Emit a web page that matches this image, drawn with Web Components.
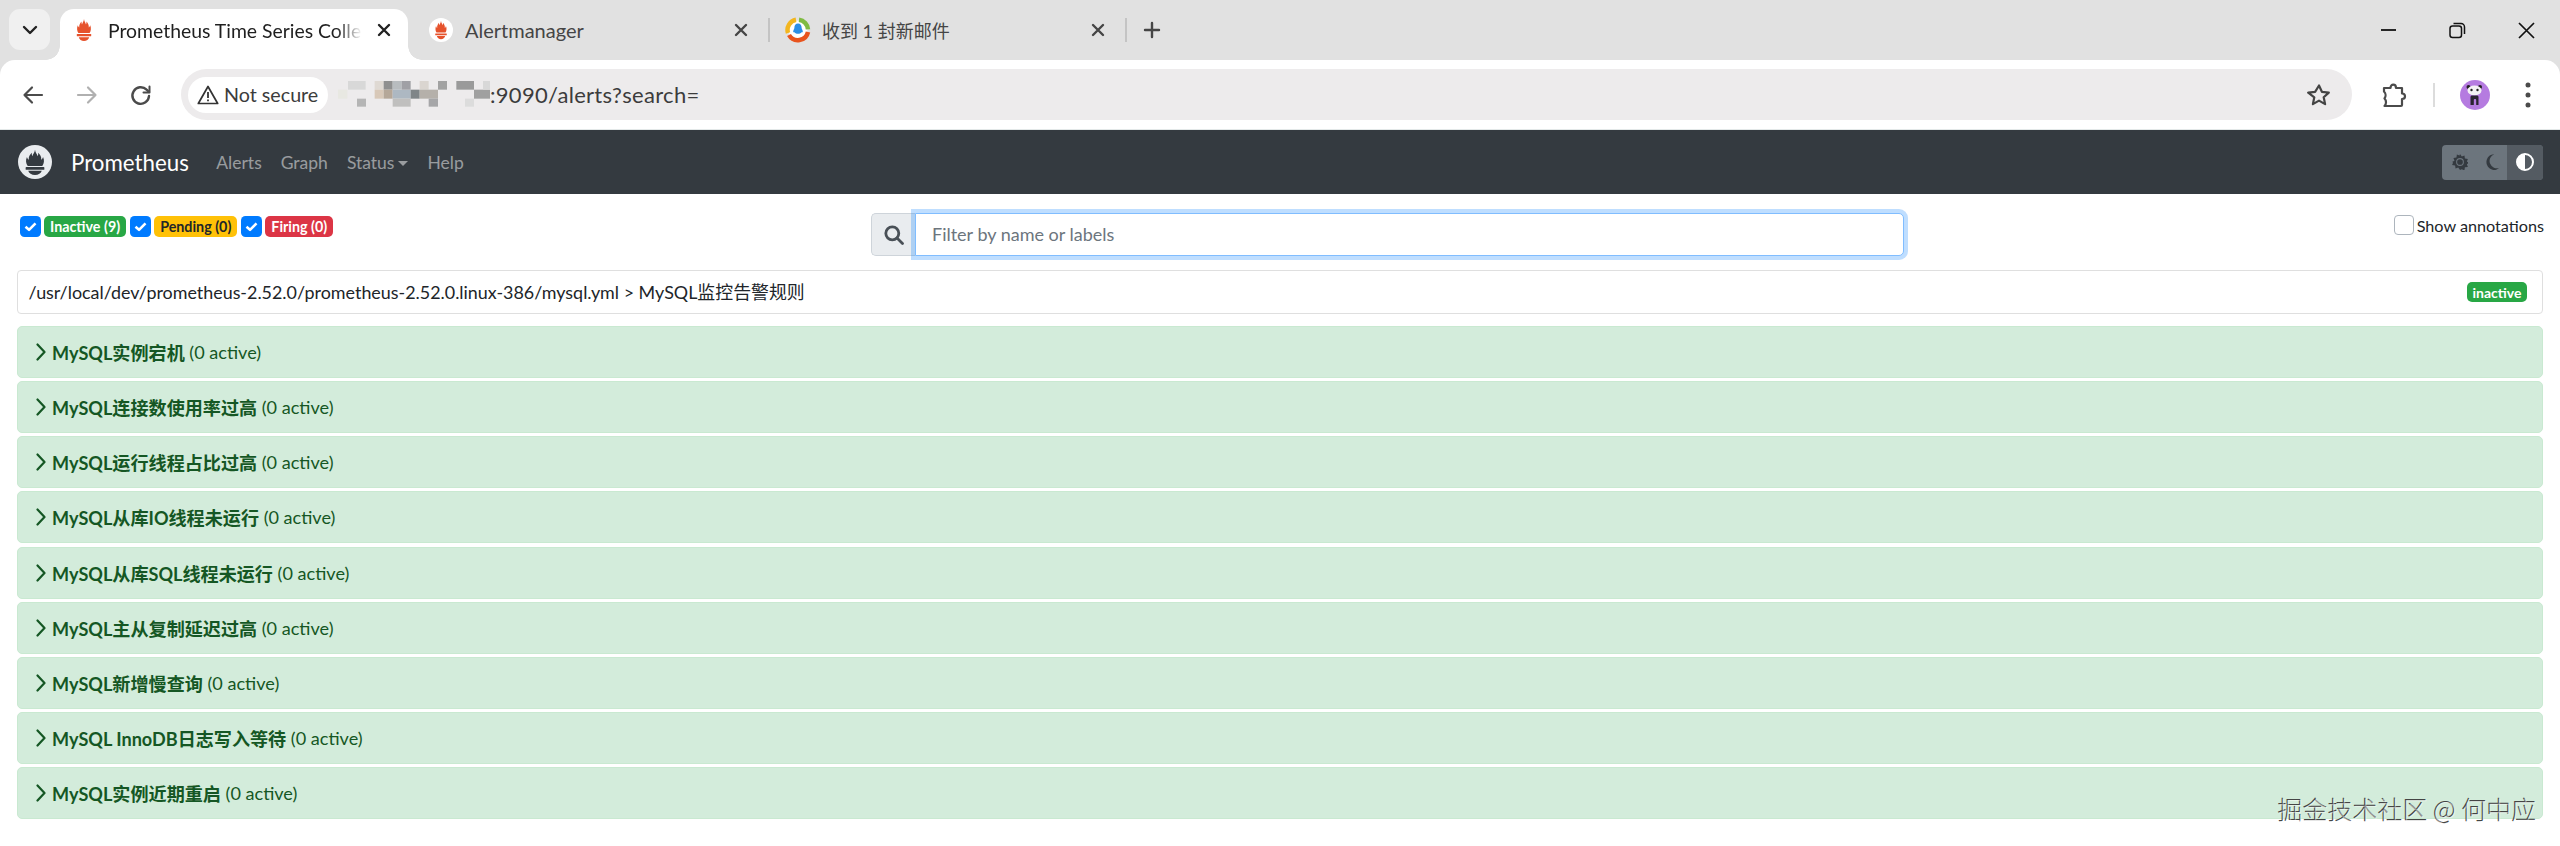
<!DOCTYPE html>
<html lang="en">
<head>
<meta charset="utf-8">
<title>Prometheus Time Series Collection and Processing Server</title>
<style>
    html, body {
        margin: 0;
        padding: 0;
        width: 2560px;
        height: 846px;
        overflow: hidden;
        background: #fff;
        font-family: Lato, "Noto Sans CJK SC", sans-serif;
        color: #212529;
    }
    body {
        position: relative;
    }
</style>
</head>
<body>
<chrome-tabs></chrome-tabs>
<chrome-toolbar></chrome-toolbar>
<prom-navbar></prom-navbar>
<alert-filters></alert-filters>
<rule-header file="/usr/local/dev/prometheus-2.52.0/prometheus-2.52.0.linux-386/mysql.yml &gt; MySQL监控告警规则"></rule-header>
<alert-row>MySQL实例宕机</alert-row>
<alert-row>MySQL连接数使用率过高</alert-row>
<alert-row>MySQL运行线程占比过高</alert-row>
<alert-row>MySQL从库IO线程未运行</alert-row>
<alert-row>MySQL从库SQL线程未运行</alert-row>
<alert-row>MySQL主从复制延迟过高</alert-row>
<alert-row>MySQL新增慢查询</alert-row>
<alert-row>MySQL InnoDB日志写入等待</alert-row>
<alert-row>MySQL实例近期重启</alert-row>
<juejin-mark>掘金技术社区 @ 何中应</juejin-mark>

<script>
const FLAME = `
    <path d="M12 1c.3 2.500 1.500 3.500 2 5.500.5-1 .6-2 .4-3 1.600 1.500 2.600 3.500 2.400 6 .7-.5 1.200-1.200 1.400-2.300 1.200 2.800.8 5.800-.6 7.800H6.400c-1.400-2-1.800-5-.6-7.800.2 1.100.7 1.800 1.400 2.300-.2-2.500.8-4.500 2.400-6-.2 1-.1 2 .4 3 .5-2 1.700-3 2-5.500z"/>
    <rect x="4.800" y="16" width="14.400" height="2.300" rx=".5"/>
    <path d="M6.800 19.200h10.400c-.5 2.200-2.600 3.700-5.200 3.700s-4.700-1.500-5.200-3.700z"/>`;

class ChromeTabs extends HTMLElement {
    constructor() {
        super();
        this.attachShadow({ mode: 'open' });
    }

    connectedCallback() {
        this.render();
    }

    render() {
        const closeIcon = (color) => `
            <svg class="x" width="14" height="14" viewBox="0 0 14 14" fill="none" stroke="${color}" stroke-width="2.400" stroke-linecap="round"><path d="M2 2l10 10M12 2L2 12"/></svg>`;

        this.shadowRoot.innerHTML = `
            <style>
                :host {
                    display: flex;
                    height: 60px;
                    box-sizing: border-box;
                    padding-top: 9px;
                    background: #e1e1e1;
                    font-size: 20px;
                    color: #454545;
                }
                .menu {
                    width: 41px;
                    height: 41px;
                    margin: 0 10px 0 9px;
                    border-radius: 11px;
                    background: #f0f0f0;
                    display: flex;
                    align-items: center;
                    justify-content: center;
                }
                .tab {
                    display: flex;
                    align-items: center;
                    height: 42px;
                    position: relative;
                    box-sizing: border-box;
                    flex: none;
                }
                .tab.active {
                    width: 348px;
                    height: 51px;
                    padding: 0 17px 9px 12px;
                    background: #fff;
                    border-radius: 14px 14px 0 0;
                    color: #1f1f1f;
                }
                .tab.active::before, .tab.active::after {
                    content: '';
                    position: absolute;
                    bottom: 0;
                    width: 14px;
                    height: 14px;
                    background: radial-gradient(circle at 0 0, transparent 13.500px, #fff 14px);
                }
                .tab.active::before {
                    left: -14px;
                }
                .tab.active::after {
                    right: -14px;
                    transform: scaleX(-1);
                }
                .tab.second {
                    width: 362px;
                    padding: 0 22px 0 21px;
                }
                .tab.third {
                    width: 357px;
                    padding: 0 22px 0 15px;
                }
                .tab .label {
                    flex: 1;
                    white-space: nowrap;
                    overflow: hidden;
                    min-width: 0;
                    margin-left: 12px;
                }
                .tab.active .label {
                    margin-right: 15px;
                    font-size: 19.400px;
                    -webkit-mask-image: linear-gradient(to right, #000 90%, transparent 100%);
                    mask-image: linear-gradient(to right, #000 90%, transparent 100%);
                }
                .tab.third .label {
                    margin-left: 11px;
                    font-size: 18px;
                }
                .tab.second::after, .tab.third::after {
                    content: '';
                    position: absolute;
                    right: 0;
                    top: 9px;
                    width: 2px;
                    height: 24px;
                    background: #c4c4c4;
                }
                .plus {
                    margin-left: 16px;
                    align-self: flex-start;
                    margin-top: 12px;
                }
                .spacer {
                    flex: 1;
                }
                .win {
                    display: flex;
                    align-items: center;
                    height: 42px;
                    margin-right: 25px;
                    gap: 52px;
                }
                svg {
                    flex: none;
                    display: block;
                }
            </style>
            <div class="menu">
                <svg width="16" height="10" viewBox="0 0 16 10" fill="none" stroke="#222" stroke-width="2.400" stroke-linecap="round" stroke-linejoin="round"><path d="M2 2l6 6 6-6"/></svg>
            </div>
            <div class="tab active">
                <svg width="24" height="24" viewBox="0 0 24 24" fill="#e6522c">${FLAME}</svg>
                <span class="label">Prometheus Time Series Colle</span>
                ${closeIcon('#222')}
            </div>
            <div class="tab second">
                <svg width="24" height="24" viewBox="0 0 24 24" fill="#e6522c"><circle cx="12" cy="12" r="12" fill="#fff"/><g transform="translate(2.400 1.800) scale(.8 .85)">${FLAME}</g></svg>
                <span class="label">Alertmanager</span>
                ${closeIcon('#454545')}
            </div>
            <div class="tab third">
                <svg width="26" height="26" viewBox="0 0 26 26" fill="none" stroke-width="4.500">
                    <circle cx="13" cy="13" r="9.500" fill="#fff" stroke="none"/>
                    <path d="M14 2.800a10.300 10.300 0 0 1 9 9.600" stroke="#7fbb42"/>
                    <path d="M23 15a10.300 10.300 0 0 1-19 3" stroke="#e8541e"/>
                    <path d="M3 16a10.300 10.300 0 0 1 8-13.200" stroke="#f3b61f"/>
                    <path d="M13 6.500c2.500 0 3.600 2 3.600 4 0 1 .4 1.500 1 3 .5 1.400 0 2.300-.8 1.500-.5 1.200-2 1.800-3.800 1.800s-3.300-.6-3.800-1.800c-.8.800-1.300-.1-.8-1.500.6-1.500 1-2 1-3 0-2 1.100-4 3.600-4z" fill="#2b8fe6" stroke="none"/>
                </svg>
                <span class="label">收到 1 封新邮件</span>
                ${closeIcon('#454545')}
            </div>
            <svg class="plus" width="18" height="18" viewBox="0 0 18 18" fill="none" stroke="#454545" stroke-width="2.400" stroke-linecap="round"><path d="M9 2v14M2 9h14"/></svg>
            <div class="spacer"></div>
            <div class="win">
                <svg width="17" height="17" viewBox="0 0 17 17" fill="none" stroke="#111" stroke-width="1.800"><path d="M1 8h15"/></svg>
                <svg width="17" height="17" viewBox="0 0 17 17" fill="none" stroke="#111" stroke-width="1.500"><rect x="1" y="4" width="11.500" height="11.500" rx="2.500"/><path d="M4.500 1.500h7.500a3.500 3.500 0 0 1 3.500 3.500v7"/></svg>
                <svg width="17" height="17" viewBox="0 0 17 17" fill="none" stroke="#111" stroke-width="1.700"><path d="M1 1l15 15M16 1L1 16"/></svg>
            </div>
        `;
    }
}

class ChromeToolbar extends HTMLElement {
    constructor() {
        super();
        this.attachShadow({ mode: 'open' });
    }

    connectedCallback() {
        this.render();
    }

    render() {
        // mosaic over the host name, cells copied from the screenshot
        const cells = [
            [60, 27, 53, 26, '#d8d8d8'], [87, 80, 27, 24, '#b5b5b5'], [30, 53, 28, 27, '#e8e8e2'],
            [140, 27, 27, 26, '#dfd9d3'], [140, 53, 27, 27, '#d8c8b8'], [167, 27, 27, 26, '#8f8f8f'],
            [167, 53, 27, 27, '#b5a798'], [194, 27, 27, 26, '#b8bcbf'], [194, 53, 54, 27, '#adb8c2'],
            [194, 80, 54, 24, '#c0bfbe'], [221, 27, 27, 26, '#a0a0a5'], [248, 53, 27, 27, '#7f8588'],
            [275, 27, 27, 26, '#dad5d0'], [275, 53, 55, 27, '#b5b0aa'], [302, 80, 28, 24, '#a6a6a8'],
            [330, 27, 27, 26, '#a2a2a2'], [385, 27, 53, 26, '#9a9a9a'], [438, 53, 48, 27, '#a0a0a0'],
            [465, 27, 21, 26, '#d8d8d8'], [411, 80, 27, 24, '#dcdcdc']
        ].map(([x, y, w, h, c]) => `<rect x="${x}" y="${y}" width="${w}" height="${h}" fill="${c}"/>`).join('');

        this.shadowRoot.innerHTML = `
            <style>
                :host {
                    display: block;
                    background: #e1e1e1;
                }
                .bar {
                    display: flex;
                    align-items: center;
                    height: 70px;
                    box-sizing: border-box;
                    background: #fff;
                    border-bottom: 1px solid #e3e8e8;
                    border-radius: 15px 15px 0 0;
                    padding-left: 21px;
                    font-size: 19.700px;
                    color: #3c3c3c;
                }
                svg {
                    flex: none;
                    display: block;
                }
                .nav {
                    display: flex;
                    gap: 30px;
                    margin-right: 28px;
                }
                .omni {
                    width: 2171px;
                    height: 51px;
                    flex: none;
                    box-sizing: border-box;
                    background: #edebec;
                    border-radius: 26px;
                    display: flex;
                    align-items: center;
                    padding-left: 7px;
                }
                .chip {
                    width: 140px;
                    height: 36px;
                    box-sizing: border-box;
                    padding-left: 9px;
                    background: #fff;
                    border-radius: 18px;
                    display: flex;
                    align-items: center;
                    gap: 5px;
                    white-space: nowrap;
                }
                .url {
                    flex: 1;
                    white-space: nowrap;
                    font-size: 22px;
                    letter-spacing: .3px;
                }
                .star {
                    margin-right: 21px;
                }
                .ext {
                    margin-left: 29px;
                }
                .sep {
                    width: 2px;
                    height: 24px;
                    margin: 0 25px 0 26px;
                    background: #dcdcdc;
                }
                .avatar {
                    width: 30px;
                    height: 30px;
                }
                .dots {
                    margin-left: 35px;
                }
            </style>
            <div class="bar">
                <div class="nav">
                    <svg width="24" height="24" viewBox="0 0 24 24" fill="none" stroke="#4b4b4b" stroke-width="2.200" stroke-linecap="round" stroke-linejoin="round"><path d="M21 12H3.500M11 4.500L3.500 12l7.500 7.500"/></svg>
                    <svg width="24" height="24" viewBox="0 0 24 24" fill="none" stroke="#b0b0b0" stroke-width="2.200" stroke-linecap="round" stroke-linejoin="round"><path d="M3 12h17.500M13 4.500l7.500 7.500-7.500 7.500"/></svg>
                    <svg width="24" height="24" viewBox="0 0 24 24" fill="none" stroke="#4b4b4b" stroke-width="2.400" stroke-linecap="round" stroke-linejoin="round"><path d="M20 13a8.300 8.300 0 1 1-2.400-6.300L20 9"/><path d="M20.500 3.500V9.500H14.500" stroke-width="2"/></svg>
                </div>
                <div class="omni">
                    <div class="chip">
                        <svg width="22" height="20" viewBox="0 0 22 20" fill="none" stroke="#333" stroke-width="1.700" stroke-linejoin="round"><path d="M11 1.500L20.700 18.500H1.300z"/><path d="M11 7v6M11 14.500v1.800" stroke-width="1.800"/></svg>
                        <span>Not secure</span>
                    </div>
                    <svg width="162" height="46" viewBox="0 0 486 138">${cells}</svg>
                    <span class="url">:9090/alerts?search=</span>
                    <svg class="star" width="24" height="24" viewBox="0 0 24 24" fill="none" stroke="#444" stroke-width="2.200" stroke-linejoin="round"><path d="M12 2.500l2.900 6.300 6.900.8-5.100 4.700 1.400 6.800-6.100-3.500-6.100 3.500 1.400-6.800L1.200 9.600l6.900-.8z"/></svg>
                </div>
                <svg class="ext" width="26" height="26" viewBox="0 0 26 26" fill="none" stroke="#4b4b4b" stroke-width="2.200" stroke-linejoin="round"><path d="M3 6h6.500c0-4.500 5.500-4.500 5.500 0h6v5.500c4 0 4 5.500 0 5.500v6a1 1 0 0 1-1 1H3.500c2-2 2-5.500 0-7.500 1.500-2 1.500-5 -.5-7z"/></svg>
                <div class="sep"></div>
                <svg class="avatar" viewBox="0 0 30 30">
                    <circle cx="15" cy="15" r="15" fill="#b57be0"/>
                    <circle cx="8.500" cy="7" r="2" fill="#222"/><circle cx="20" cy="7" r="2" fill="#222"/>
                    <ellipse cx="14.500" cy="10.500" rx="7" ry="5" fill="#f4f2f4"/>
                    <circle cx="11.500" cy="10" r="1.200" fill="#222"/><circle cx="17.500" cy="10" r="1.200" fill="#222"/>
                    <path d="M10.500 25v-8c0-1 .8-1.500 1.500-1.500h5c.7 0 1.500.5 1.500 1.500v8h-2.300v-5c0-1.200-2.400-1.200-2.400 0v5z" fill="#2a2430"/>
                </svg>
                <svg class="dots" width="6" height="26" viewBox="0 0 6 26" fill="#4b4b4b"><circle cx="3" cy="3" r="2.500"/><circle cx="3" cy="13" r="2.500"/><circle cx="3" cy="23" r="2.500"/></svg>
            </div>
        `;
    }
}

class PromNavbar extends HTMLElement {
    constructor() {
        super();
        this.attachShadow({ mode: 'open' });
    }

    connectedCallback() {
        this.render();
    }

    render() {
        this.shadowRoot.innerHTML = `
            <style>
                :host {
                    display: flex;
                    align-items: center;
                    height: 64px;
                    box-sizing: border-box;
                    padding: 0 17px 0 18px;
                    background: #343a40;
                    font-size: 17.500px;
                }
                .logo {
                    display: block;
                    flex: none;
                }
                .brand {
                    margin: 0 18px 0 19px;
                    color: #fff;
                    font-size: 22.300px;
                }
                a {
                    color: rgba(255, 255, 255, .5);
                    text-decoration: none;
                    padding: 0 9.500px;
                }
                .caret {
                    display: inline-block;
                    margin-left: 4px;
                    vertical-align: 3px;
                    border-top: 5px solid rgba(255, 255, 255, .5);
                    border-left: 5px solid transparent;
                    border-right: 5px solid transparent;
                }
                .theme {
                    margin-left: auto;
                    display: flex;
                    height: 35px;
                    border-radius: 4px;
                    overflow: hidden;
                    background: #6c757d;
                }
                .theme div {
                    width: 35px;
                    display: flex;
                    align-items: center;
                    justify-content: center;
                }
                .theme .mid {
                    width: 30px;
                    padding-left: 2px;
                    box-sizing: border-box;
                }
                .theme .on {
                    width: 36px;
                    background: #545b62;
                }
            </style>
            <svg class="logo" width="34" height="34" viewBox="0 0 34 34">
                <circle cx="17" cy="17" r="17" fill="#e9ecef"/>
                <g transform="translate(1.400 3.700) scale(1.300 1.150)" fill="#343a40">${FLAME}</g>
            </svg>
            <span class="brand">Prometheus</span>
            <a>Alerts</a>
            <a>Graph</a>
            <a>Status<span class="caret"></span></a>
            <a>Help</a>
            <div class="theme">
                <div>
                    <svg width="16" height="16" viewBox="0 0 18 18" fill="#343a40">
                        <path d="M9 0l2 2.800 3-1.200.5 3.400 3.400.5-1.200 3 2.800 1.500-2.800 1.500 1.200 3-3.400.5-.5 3.400-3-1.200L9 18l-2-2.800-3 1.200-.5-3.400-3.400-.5 1.200-3L0 9l2.800-1.500-1.200-3 3.400-.5.500-3.400 3 1.200z"/>
                        <circle cx="9" cy="9" r="4.400" fill="#6c757d"/><circle cx="9" cy="9" r="3.200" fill="#343a40"/>
                    </svg>
                </div>
                <div class="mid">
                    <svg width="14" height="16" viewBox="0 0 16 18" fill="#343a40"><path d="M9.500 0a9 9 0 1 0 6 15.700A7.500 7.500 0 0 1 9.500 0z"/></svg>
                </div>
                <div class="on">
                    <svg width="18" height="18" viewBox="0 0 18 18"><circle cx="9" cy="9" r="8" fill="none" stroke="#fff" stroke-width="2"/><path d="M9 1a8 8 0 0 0 0 16z" fill="#fff"/></svg>
                </div>
            </div>
        `;
    }
}

class AlertFilters extends HTMLElement {
    constructor() {
        super();
        this.attachShadow({ mode: 'open' });
    }

    connectedCallback() {
        this.render();
    }

    render() {
        const check = `<svg class="check" width="21" height="21" viewBox="0 0 21 21"><rect width="21" height="21" rx="4.500" fill="#007bff"/><path d="M5.500 10.800l3.500 3 6.500-6.500" fill="none" stroke="#fff" stroke-width="2.600" stroke-linejoin="round"/></svg>`;

        this.shadowRoot.innerHTML = `
            <style>
                :host {
                    display: flex;
                    align-items: flex-start;
                    height: 76px;
                    box-sizing: border-box;
                    padding: 19px 16px 0 17px;
                }
                .states {
                    width: 854px;
                    flex: none;
                    box-sizing: border-box;
                    padding: 3px 0 0 3px;
                    display: flex;
                    align-items: center;
                    gap: 3px;
                }
                .check {
                    display: block;
                    flex: none;
                }
                .badge {
                    height: 21px;
                    box-sizing: border-box;
                    padding: 0 6px;
                    margin-right: 1px;
                    border-radius: 5px;
                    display: flex;
                    align-items: center;
                    font-size: 14.300px;
                    font-weight: 700;
                    color: #fff;
                    white-space: nowrap;
                }
                .green { background: #28a745; }
                .yellow { background: #ffc107; color: #212529; }
                .red { background: #dc3545; }
                .search {
                    width: 1033px;
                    height: 43px;
                    flex: none;
                    display: flex;
                }
                .addon {
                    width: 44px;
                    box-sizing: border-box;
                    border: 1px solid #ced4da;
                    border-right: 0;
                    border-radius: 5px 0 0 5px;
                    background: #e9ecef;
                    display: flex;
                    align-items: center;
                    justify-content: center;
                }
                .input {
                    flex: 1;
                    box-sizing: border-box;
                    border: 1px solid #80bdff;
                    border-radius: 0 5px 5px 0;
                    box-shadow: 0 0 0 4px rgba(0, 123, 255, .25);
                    background: #fff;
                    padding: 0 0 1px 16px;
                    display: flex;
                    align-items: center;
                    font-size: 18px;
                    color: #6c757d;
                }
                .annotations {
                    flex: 1;
                    display: flex;
                    justify-content: flex-end;
                    align-items: center;
                    gap: 3px;
                    padding-top: 2px;
                    font-size: 16.200px;
                    white-space: nowrap;
                }
                .box {
                    width: 20px;
                    height: 20px;
                    box-sizing: border-box;
                    border: 1px solid #adb5bd;
                    border-radius: 4px;
                    background: #fff;
                }
            </style>
            <div class="states">
                ${check}<span class="badge green">Inactive (9)</span>
                ${check}<span class="badge yellow">Pending (0)</span>
                ${check}<span class="badge red">Firing (0)</span>
            </div>
            <div class="search">
                <div class="addon">
                    <svg width="20" height="20" viewBox="0 0 20 20" fill="none" stroke="#495057" stroke-width="2.800"><circle cx="8.300" cy="8.300" r="6.500"/><path d="M13 13l5.500 5.500" stroke-linecap="round"/></svg>
                </div>
                <div class="input">Filter by name or labels</div>
            </div>
            <label class="annotations"><span class="box"></span><span>Show annotations</span></label>
        `;
    }
}

class RuleHeader extends HTMLElement {
    constructor() {
        super();
        this.attachShadow({ mode: 'open' });
    }

    connectedCallback() {
        this.render();
    }

    render() {
        const file = this.getAttribute('file') || '';
        const span = document.createElement('span');
        span.textContent = file;

        this.shadowRoot.innerHTML = `
            <style>
                :host {
                    display: flex;
                    align-items: center;
                    justify-content: space-between;
                    height: 44px;
                    box-sizing: border-box;
                    margin: 0 17px 12px;
                    padding: 0 15px 2px 10.500px;
                    border: 1.500px solid #dfdfdf;
                    border-radius: 4px;
                    font-size: 17.900px;
                }
                .badge {
                    height: 20px;
                    box-sizing: border-box;
                    padding: 0 5.500px;
                    margin-top: 2px;
                    border-radius: 5px;
                    display: flex;
                    align-items: center;
                    background: #28a745;
                    color: #fff;
                    font-size: 14px;
                    font-weight: 700;
                }
            </style>
            ${span.outerHTML}
            <span class="badge">inactive</span>
        `;
    }
}

class AlertRow extends HTMLElement {
    constructor() {
        super();
        this.attachShadow({ mode: 'open' });
    }

    connectedCallback() {
        this.render();
    }

    render() {
        const count = this.getAttribute('count') || '0';

        this.shadowRoot.innerHTML = `
            <style>
                :host {
                    display: flex;
                    align-items: center;
                    height: 52px;
                    box-sizing: border-box;
                    margin: 0 17px 3.125px;
                    padding: 0 0 0 18px;
                    background: #d3ecdb;
                    border: 1px solid #c9e9d1;
                    border-radius: 5px;
                    color: #155724;
                    font-size: 18.100px;
                    white-space: pre;
                }
                svg {
                    display: block;
                    flex: none;
                    margin-right: 6px;
                }
                b {
                    font-weight: 700;
                }
            </style>
            <svg width="10" height="18" viewBox="0 0 10 18" fill="none" stroke="#155724" stroke-width="2.200" stroke-linecap="round" stroke-linejoin="round"><path d="M1.500 1.500L8.500 9l-7 7.500"/></svg>
            <b><slot></slot></b><span> (${count} active)</span>
        `;
    }
}

class JuejinMark extends HTMLElement {
    constructor() {
        super();
        this.attachShadow({ mode: 'open' });
    }

    connectedCallback() {
        this.shadowRoot.innerHTML = `
            <style>
                :host {
                    position: absolute;
                    right: 23px;
                    top: 793px;
                    font-family: "Noto Sans CJK SC", sans-serif;
                    font-size: 25px;
                    font-weight: 300;
                    line-height: 32px;
                    color: rgba(255, 255, 255, .45);
                    text-shadow: -1px -1px 0 #444;
                    white-space: nowrap;
                }
            </style>
            <slot></slot>
        `;
    }
}

customElements.define('chrome-tabs', ChromeTabs);
customElements.define('chrome-toolbar', ChromeToolbar);
customElements.define('prom-navbar', PromNavbar);
customElements.define('alert-filters', AlertFilters);
customElements.define('rule-header', RuleHeader);
customElements.define('alert-row', AlertRow);
customElements.define('juejin-mark', JuejinMark);
</script>
</body>
</html>
